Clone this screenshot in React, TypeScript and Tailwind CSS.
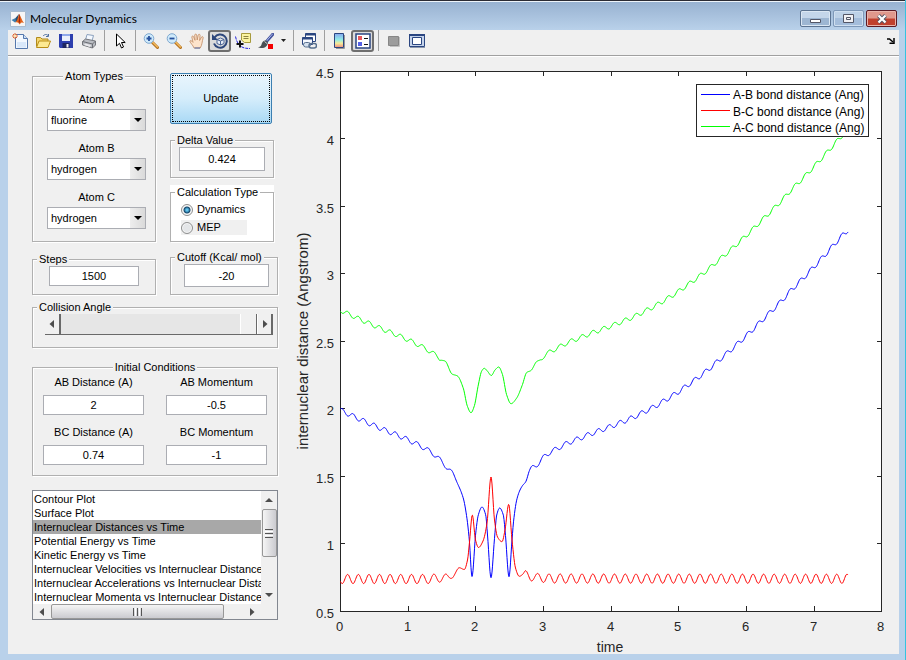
import { useState } from 'react';
import type { ReactNode } from 'react';
import clsx from 'clsx';

type Point = [number, number];

const ATOMS = ['hydrogen', 'fluorine', 'chlorine', 'oxygen'];

const PLOTS = [
  'Contour Plot',
  'Surface Plot',
  'Internuclear Distances vs Time',
  'Potential Energy vs Time',
  'Kinetic Energy vs Time',
  'Internuclear Velocities vs Internuclear Distance',
  'Internuclear Accelerations vs Internuclear Distance',
  'Internuclear Momenta vs Internuclear Distance',
];

// Mean A-B distance, without the B-C vibration
const AB_KNOTS: Point[] = [
  [340, 410], [350, 414.7], [366.5, 422.2], [382.7, 429.2], [399, 435.8],
  [415.3, 443.3], [426.3, 449.2], [437.3, 457], [447.3, 468], [451.7, 471],
  [456.7, 481.7], [463.3, 498.3], [466.7, 516.7], [469.3, 540], [472, 576.5],
  [475.7, 533.3], [478.3, 515], [482, 507], [485.7, 515], [487.5, 535],
  [491, 577.7], [494.5, 538.3], [496.7, 515], [499.7, 508], [503.3, 515],
  [505.3, 533.3], [509, 576.7], [512, 540], [513.7, 520], [516.7, 500],
  [520, 490], [526, 480], [529.3, 471.7], [532.7, 467], [536.7, 465],
  [546, 455], [557.7, 448.3], [569, 442.5], [579.7, 438.3], [590.3, 434],
  [601.2, 430], [612, 426], [622.7, 421.7], [633.5, 417.2], [644.3, 411.8],
  [655, 406.3], [665.5, 400], [676.2, 393.3], [686.5, 386], [697.2, 378.2],
  [707.7, 370], [718, 361], [728.7, 351.8], [739.3, 342.2], [750, 332.2],
  [760.5, 321.8], [771, 311.5], [781.7, 300.7], [791.7, 289.7],
  [802.7, 278.7], [823.3, 256.7], [843.8, 234], [848, 230],
];

const BC_KNOTS: Point[] = [
  [340, 579], [425, 579], [446, 577.5], [452.3, 577], [459.3, 567.7],
  [464.3, 569.5], [467.5, 560], [469.5, 542], [472.3, 515], [475.5, 540],
  [478.5, 547.5], [483, 541], [487, 523], [491, 477], [494.5, 520],
  [497.5, 537], [502, 541.7], [505, 530], [508.7, 504.3], [512, 540],
  [515.5, 568], [519.3, 576.3], [525.3, 573], [531.7, 577.5], [538, 577.5],
  [549, 578.5], [848, 578.8],
];

// A-C distance while the atoms collide
const AC_KNOTS: Point[] = [
  [440, 360], [445, 361], [452, 374], [457.5, 376], [463.3, 388.3],
  [467.3, 406], [471, 412.7], [474.3, 406], [478.3, 385], [481.7, 371],
  [484.3, 368.3], [487.3, 371], [491.3, 375.5], [495, 370], [498.7, 367],
  [502.3, 374], [506.7, 395], [511, 403.7], [516.7, 398], [522.3, 385],
  [526.7, 372.5], [531, 370.5], [536.7, 361.5], [540, 360],
];

// Positions of the vibration peaks, numbered
const PHASE_KNOTS: Point[] = [
  [336.8, -1], [347.6, 0], [445.8, 9], [459.3, 10], [525.3, 16], [537.5, 17],
  [549, 18], [582, 21], [678.7, 30], [847, 46], [857, 47],
];

const AMPLITUDE_KNOTS: Point[] = [
  [340, 1], [430, 1], [446, 0.75], [456, 0], [522, 0], [526, 0.55],
  [538, 0.9], [549, 1], [850, 1],
];

// Monotone cubic (Fritsch-Carlson) through the knots
function monotone(points: Point[]) {
  const n = points.length;
  const slopes = points.slice(1).map(([x, y], i) => (y - points[i][1]) / (x - points[i][0]));
  const tangents = points.map((_, i) => {
    if (i === 0) return slopes[0];
    if (i === n - 1) return slopes[n - 2];
    const a = slopes[i - 1];
    const b = slopes[i];
    return a * b <= 0 ? 0 : (2 * a * b) / (a + b);
  });

  return (x: number) => {
    let i = 0;
    while (i < n - 2 && x > points[i + 1][0]) i++;
    const h = points[i + 1][0] - points[i][0];
    const t = (x - points[i][0]) / h;
    const t2 = t * t;
    const t3 = t2 * t;
    return (
      (2 * t3 - 3 * t2 + 1) * points[i][1] +
      (t3 - 2 * t2 + t) * h * tangents[i] +
      (3 * t2 - 2 * t3) * points[i + 1][1] +
      (t3 - t2) * h * tangents[i + 1]
    );
  };
}

const meanAB = monotone(AB_KNOTS);
const meanBC = monotone(BC_KNOTS);
const collisionAC = monotone(AC_KNOTS);
const phase = monotone(PHASE_KNOTS);
const amplitude = monotone(AMPLITUDE_KNOTS);

const wave = (x: number) => amplitude(x) * Math.cos(2 * Math.PI * phase(x));
const curveAB = (x: number) => meanAB(x) + 2.4 * wave(x);
const curveBC = (x: number) => meanBC(x) - 4.6 * wave(x);
const curveAC = (x: number) =>
  x > 440 && x < 540 ? collisionAC(x) : curveAB(x) + curveBC(x) - 679;

function trace(fn: (x: number) => number) {
  const out: string[] = [];
  for (let x = 340.5; x <= 848; x += 0.5) out.push(`${x},${fn(x).toFixed(2)}`);
  return out.join(' ');
}

const SERIES = [
  { label: 'A-B bond distance (Ang)', color: '#0000ff', points: trace(curveAB) },
  { label: 'B-C bond distance (Ang)', color: '#ff0000', points: trace(curveBC) },
  { label: 'A-C bond distance (Ang)', color: '#00ff00', points: trace(curveAC) },
];

const X_TICKS = [0, 1, 2, 3, 4, 5, 6, 7, 8];
const Y_TICKS = [0.5, 1, 1.5, 2, 2.5, 3, 3.5, 4, 4.5];
const tickX = (t: number) => Math.round(340 + t * 67.65) + 0.5;
const tickY = (v: number) => Math.round(679 - v * 135) - 0.5;

const Chart = () => (
  <svg
    viewBox="290 57 609 597"
    className="w-full"
    role="img"
    aria-label="Internuclear distances vs time"
    fontFamily='"Liberation Sans", Arial, sans-serif'
  >
    <rect x="340.5" y="71.5" width="541" height="540" fill="#fff" stroke="#262626" />
    {X_TICKS.map(t => (
      <g key={t}>
        <path d={`M${tickX(t)} 611v-5M${tickX(t)} 71v5`} stroke="#262626" />
        <text x={tickX(t) - 1} y="631" fontSize="13" textAnchor="middle" fill="#262626">
          {t}
        </text>
      </g>
    ))}
    {Y_TICKS.map(v => (
      <g key={v}>
        <path d={`M340 ${tickY(v)}h5M882 ${tickY(v)}h-5`} stroke="#262626" />
        <text x="334" y={tickY(v) + 6} fontSize="13" textAnchor="end" fill="#262626">
          {v}
        </text>
      </g>
    ))}
    <text x="610" y="652" fontSize="14" textAnchor="middle" fill="#262626">
      time
    </text>
    <text
      transform="translate(308 341) rotate(-90)"
      fontSize="15"
      textAnchor="middle"
      fill="#262626"
    >
      internuclear distance (Angstrom)
    </text>
    {SERIES.map(s => (
      <polyline key={s.label} points={s.points} fill="none" stroke={s.color} strokeLinejoin="round" />
    ))}
    <rect x="696.5" y="84.5" width="172" height="52" fill="#fff" stroke="#262626" />
    {SERIES.map((s, i) => (
      <g key={s.label}>
        <path d={`M701 ${94.5 + i * 16}h29`} stroke={s.color} />
        <text x="733" y={99 + i * 16.5} fontSize="12" fill="#000">
          {s.label}
        </text>
      </g>
    ))}
  </svg>
);

const Icon = ({ children }: { children: ReactNode }) => (
  <svg viewBox="0 0 16 16" className="size-4" fill="none" aria-hidden="true">
    {children}
  </svg>
);

const MatlabIcon = () => (
  <Icon>
    <path d="M0.5 0.5h15v15h-15z" fill="#f6f6f6" stroke="#a9bccf" />
    <path d="M1.5 9 5.5 7 7.5 9.5 5 11.5z" fill="#3f7fae" />
    <path d="M5.5 7 9 3 8 9 6 11z" fill="#274f74" />
    <path d="M9 3C10.5 4 11.5 9 14 12c-2-1-3-.7-4.5 1.5C8.600 11.500 7.500 11 5 11.500 7.500 10 8 6 9 3z" fill="#e2621b" />
    <path d="M9 3c1 1 1.500 5 1 9L8.500 11C9.500 8 9 5 9 3z" fill="#9c2812" />
  </Icon>
);

const NewIcon = () => (
  <Icon>
    <path d="M3.500 1.500h8l4 4v10h-12z" fill="#f3f8fe" stroke="#5578ad" />
    <path d="M5 9h9v5.500H5z" fill="#d9e8fa" />
    <path d="M11.500 1.500v4h4" fill="#cfe0f5" stroke="#5578ad" />
    <path d="M3 0v6M0 3h6M1 1l4 4M5 1 1 5" stroke="#e2622c" />
    <circle cx="3" cy="3" r="1.200" fill="#ffe8b0" />
  </Icon>
);

const OpenIcon = () => (
  <Icon>
    <path d="M1.500 13.500v-9h4l1.500 1.500h6v2" fill="#f6d66d" stroke="#b08a1c" />
    <path d="M1.500 14.500 4 8h11.500l-2.500 6.500z" fill="#fdea92" stroke="#b98e16" />
    <path d="M8 3c2-2 4-2 5.500 0M13.500 1v2.500H11" stroke="#4f6f9f" />
  </Icon>
);

const SaveIcon = () => (
  <Icon>
    <path d="M1 1h14v14H2l-1-1z" fill="#2d3fae" />
    <path d="M4 1h8v7H4z" fill="#e9effb" />
    <path d="M4 1h8v2H4z" fill="#8fa8ea" />
    <path d="M4.500 10h7v5h-7z" fill="#1c2560" />
    <path d="M8.500 11h2v3.500h-2z" fill="#f2f2f2" />
  </Icon>
);

const PrintIcon = () => (
  <Icon>
    <path d="M4.500 7 6 1.500l6.500 1L11 8z" fill="#f3f8ff" stroke="#8ba1bd" />
    <path d="M1.500 8.500 4.500 6l10 2v4l-3 3-10-3z" fill="#b9bcc2" stroke="#74777c" />
    <path d="m1.500 8.500 10 2.500 3-3M11.500 11v4" stroke="#6b6e74" />
    <path d="m3 12 1-1.500 6 1.500-1 2z" fill="#e9e9ec" />
  </Icon>
);

const PointerIcon = () => (
  <Icon>
    <path d="M4.500 1v12l3-2.700L9.500 15l2-1L9.500 9.500h3.700z" fill="#fff" stroke="#000" />
  </Icon>
);

const Magnifier = ({ plus }: { plus?: boolean }) => (
  <Icon>
    <path d="m9.500 9.500 5 5" stroke="#b4711f" strokeWidth="3" strokeLinecap="round" />
    <path d="m9.500 9 5 5" stroke="#f1b95e" strokeWidth="1.500" strokeLinecap="round" />
    <circle cx="6" cy="5.500" r="4.800" fill="#cfeafb" stroke="#7fa8cf" />
    <path d={plus ? 'M3.500 5.500h5M6 3v5' : 'M3.500 5.500h5'} stroke="#26519e" strokeWidth="1.800" />
  </Icon>
);

const HandIcon = () => (
  <Icon>
    <path
      d="M5 15C4 12 1.500 10.500.800 8c.5-1 2-.3 3.200 1.400L2.800 4c0-1.300 1.500-1.300 1.900 0L6 7.300 5.700 2c.2-1.200 1.800-1.200 2 0l.5 5 1-5c.4-1.100 1.900-.9 1.900.3l-.5 5.200 1.900-3.500c.7-1 2-.2 1.600 1-1 3.500-1 7-2.900 10z"
      fill="#fde3cb"
      stroke="#c08a62"
      strokeWidth=".8"
    />
    <path d="M5.500 15h5.500" stroke="#506aa8" />
  </Icon>
);

const RotateIcon = () => (
  <Icon>
    <path d="M2.600 4.500A6.600 6.600 0 1 1 2 10.500" stroke="#2d477c" strokeWidth="2" />
    <path d="M0 1v6h6z" fill="#2d477c" />
    <path d="m5 6.500 3.500-1.500L12 6.500v4L8.500 12 5 10.500zM5 6.500 8.500 8 12 6.500M8.500 8v4" fill="#e8eef8" stroke="#4b6496" />
  </Icon>
);

const DataCursorIcon = () => (
  <Icon>
    <path d="M.500 3.500c1 5 3 9 7.500 11 3 1 5 1 7 1" stroke="#2222dd" strokeDasharray="3 1" />
    <path d="M6.500.500h9v9H9.500L6.500 7z" fill="#fbf4a1" stroke="#a79a3c" />
    <path d="M8.500 3.500h5M8.500 5.500h5" stroke="#8d8342" />
    <path d="M5 7.500v7M1.500 11h7" stroke="#111" strokeWidth="2" />
  </Icon>
);

const BrushIcon = () => (
  <Icon>
    <path d="M15 1 8.500 8.500" stroke="#45549c" strokeWidth="3" strokeLinecap="round" />
    <path d="M14.500 1 8.500 8" stroke="#aab8ee" strokeLinecap="round" />
    <path d="M8.500 7.500C5.500 7 4 9 3.500 11.500 3 13.500 1.500 14 0 14c2 1.500 6 1.500 8-.5 1.500-1.500 2-3 1.800-4.500z" fill="#4b5054" />
    <path d="m6.500 8.500 2.500 2" stroke="#c8cdd3" />
    <path d="M10 11h5v5h-5z" fill="#f40000" />
  </Icon>
);

const LinkIcon = () => (
  <Icon>
    <path d="M4.500.500h10v8h-10z" fill="#fff" stroke="#2b4681" />
    <path d="M4.500 1.500h10" stroke="#2b4681" strokeWidth="2" />
    <path d="M1.500 4.500h10v7h-10z" fill="#f6f9ff" stroke="#2b4681" />
    <path d="M1.500 5.500h10" stroke="#2b4681" strokeWidth="2" />
    <rect x="2.500" y="9.500" width="7" height="4.500" rx="2.200" fill="#d5e1ef" stroke="#58708f" />
    <rect x="8" y="10.500" width="7.500" height="4.500" rx="2.200" stroke="#58708f" strokeWidth="1.500" />
  </Icon>
);

const ColorbarIcon = () => (
  <Icon>
    <defs>
      <linearGradient id="colorbar" x1="0" y1="0" x2="0" y2="1">
        <stop offset="0" stopColor="#86a6f0" />
        <stop offset="0.45" stopColor="#92eee6" />
        <stop offset="0.7" stopColor="#f4ec9a" />
        <stop offset="1" stopColor="#f08a80" />
      </linearGradient>
    </defs>
    <path d="M12.500 2v13.500H4" stroke="#999" />
    <path d="M2.500.500h9v14h-9z" fill="url(#colorbar)" stroke="#2b4681" />
  </Icon>
);

const LegendIcon = () => (
  <Icon>
    <path d="M1 1h14v14H1z" fill="#fff" stroke="#2b4681" strokeWidth="1.500" />
    <path d="M3 3h4v4H3z" fill="#e8585c" />
    <path d="M3 9h4v4H3z" fill="#5560e6" />
    <path d="M9 5.500h4M9 11.500h4" stroke="#111" />
  </Icon>
);

const HideToolsIcon = () => (
  <Icon>
    <path d="M13.500 4v9.500H4" stroke="#c2c2c2" />
    <path d="M2.500 3.500h10v9h-10z" fill="#9c9c9c" stroke="#868686" />
  </Icon>
);

const ShowToolsIcon = () => (
  <Icon>
    <path d="M.500 1.500h15v12H.500z" fill="#c5d3ea" stroke="#2b4681" />
    <path d="M0 2h16" stroke="#2b4681" strokeWidth="2" />
    <path d="M3.500 4.500h9v7h-9z" fill="#fff" stroke="#2b4681" />
    <path d="M1 14.500h15" stroke="#8c98ad" />
  </Icon>
);

interface ToolProps {
  label: string;
  pressed?: boolean;
  children: ReactNode;
}

const Tool = ({ label, pressed, children }: ToolProps) => (
  <button
    type="button"
    aria-label={label}
    aria-pressed={pressed}
    className={clsx(
      'flex h-[22px] w-[23px] shrink-0 items-center justify-center',
      pressed && 'rounded-[3px] border-2 border-[#6f6f6f] bg-[#dcdcdc]'
    )}
  >
    {children}
  </button>
);

const Separator = () => (
  <div className="flex w-2 shrink-0 justify-center">
    <div className="h-[21px] w-px bg-[#a0a0a0]" />
  </div>
);

const Toolbar = () => (
  <div className="flex h-[26px] items-center border-b border-[#a0a0a0] bg-[#f0f0f0] pb-1">
    <Tool label="New Figure"><NewIcon /></Tool>
    <Tool label="Open File"><OpenIcon /></Tool>
    <Tool label="Save Figure"><SaveIcon /></Tool>
    <Tool label="Print Figure"><PrintIcon /></Tool>
    <Separator />
    <Tool label="Edit Plot"><PointerIcon /></Tool>
    <Separator />
    <Tool label="Zoom In"><Magnifier plus /></Tool>
    <Tool label="Zoom Out"><Magnifier /></Tool>
    <Tool label="Pan"><HandIcon /></Tool>
    <Tool label="Rotate 3D" pressed><RotateIcon /></Tool>
    <Tool label="Data Cursor"><DataCursorIcon /></Tool>
    <Tool label="Brush Data"><BrushIcon /></Tool>
    <button type="button" aria-label="Brush colors" className="flex w-3 shrink-0 justify-center">
      <svg viewBox="0 0 5 3" className="h-[3px] w-[5px]"><path d="M0 0h5L2.500 3z" fill="#222" /></svg>
    </button>
    <Separator />
    <Tool label="Link Plot"><LinkIcon /></Tool>
    <Separator />
    <Tool label="Insert Colorbar"><ColorbarIcon /></Tool>
    <Tool label="Insert Legend" pressed><LegendIcon /></Tool>
    <Separator />
    <Tool label="Hide Plot Tools"><HideToolsIcon /></Tool>
    <Tool label="Show Plot Tools"><ShowToolsIcon /></Tool>
    <button type="button" aria-label="Dock Figure" className="mr-1 ml-auto">
      <svg viewBox="0 0 8 6" className="h-[6px] w-2" fill="none">
        <path d="M0 1h2.500L6 4" stroke="#000" strokeWidth="1.500" />
        <path d="M7 0v5.300H2.500" stroke="#000" strokeWidth="1.500" />
      </svg>
    </button>
  </div>
);

const TitleBar = () => (
  <header className="flex h-[30px] items-center border-t border-[#2b2b33] bg-linear-to-b from-[#97b1d0] to-[#b9d1ea] pr-2 pl-[10px] shadow-[inset_0_1px_0_#eef4fa]">
    <div className="mt-[6px]">
      <MatlabIcon />
    </div>
    <h1 className="mt-[6px] ml-1 flex-1 font-['Lato','Open_Sans',sans-serif] text-xs leading-4 text-black">
      Molecular Dynamics
    </h1>
    <div className="mt-[6px] flex gap-[2px]">
      <button type="button" aria-label="Minimize" className="flex h-[17px] w-[31px] items-center justify-center rounded-[2px] border border-[#5b7391] bg-linear-to-b from-[#c4d6ea] from-50% to-[#9db6d2] to-50% shadow-[inset_0_0_0_1px_#dbe7f3]">
        <svg viewBox="0 0 11 11" className="size-[11px]"><path d="M.500 6.500h10v3H.500z" fill="#fff" stroke="#535666" /></svg>
      </button>
      <button type="button" aria-label="Maximize" className="flex h-[17px] w-[31px] items-center justify-center rounded-[2px] border border-[#7e98b8] bg-linear-to-b from-[#bdd1e7] from-50% to-[#a4bddb] to-50% shadow-[inset_0_0_0_1px_#cfdff0]">
        <svg viewBox="0 0 11 9" className="h-[9px] w-[11px]"><path d="M.500.500h10v8H.500zM3.500 3.500h4v2h-4z" fill="#f1f1f4" stroke="#535666" /></svg>
      </button>
      <button type="button" aria-label="Close" className="flex h-[17px] w-[31px] items-center justify-center rounded-[2px] border border-[#5c1a24] bg-linear-to-b from-[#e0988c] from-45% to-[#c0402e] to-55% shadow-[inset_0_0_0_1px_#e9b3aa]">
        <svg viewBox="0 0 12 10" className="h-[10px] w-3" fill="none">
          <path d="m2.500 1.500 7 7M9.500 1.500l-7 7" stroke="#535666" strokeWidth="4" />
          <path d="m2.500 1.500 7 7M9.500 1.500l-7 7" stroke="#fff" strokeWidth="2.200" />
        </svg>
      </button>
    </div>
  </header>
);

interface GroupProps {
  title: string;
  centered?: boolean;
  white?: boolean;
  className?: string;
  children: ReactNode;
}

const Group = ({ title, centered, white, className, children }: GroupProps) => (
  <fieldset className="min-w-0 border border-[#b0b0b0] shadow-[1px_1px_0_#fff,inset_1px_1px_0_#fff]">
    <legend
      className={clsx(
        'h-[14px] px-[2px] leading-[14px] whitespace-nowrap',
        centered ? 'mx-auto' : 'ml-1',
        white ? 'bg-white' : 'bg-[#f0f0f0]'
      )}
    >
      {title}
    </legend>
    <div className={className}>{children}</div>
  </fieldset>
);

interface FieldProps {
  id: string;
  label: string;
  value: string;
  showLabel?: boolean;
  className?: string;
}

const Field = ({ id, label, value, showLabel, className }: FieldProps) => (
  <div className="flex flex-col">
    {showLabel && (
      <label htmlFor={id} className="mb-[5px] text-center leading-4">
        {label}
      </label>
    )}
    <input
      id={id}
      aria-label={label}
      defaultValue={value}
      className={clsx('w-full border border-[#abadb3] bg-white text-center outline-none', className)}
    />
  </div>
);

const AtomSelect = ({ id, label, value }: { id: string; label: string; value: string }) => (
  <div className="flex flex-col">
    <label htmlFor={id} className="mb-[2px] text-center leading-4">
      {label}
    </label>
    <div className="relative">
      <select
        id={id}
        defaultValue={value}
        className="h-[22px] w-full appearance-none border border-[#abadb3] bg-white pl-[3px] outline-none"
      >
        {ATOMS.map(atom => (
          <option key={atom}>{atom}</option>
        ))}
      </select>
      <div className="pointer-events-none absolute top-px right-px bottom-px flex w-[15px] items-center justify-center bg-linear-to-r from-[#eeeeee] to-[#dadada]">
        <svg viewBox="0 0 8 4" className="h-1 w-2"><path d="M0 0h8L4 4z" /></svg>
      </div>
    </div>
  </div>
);

const Triangle = ({ direction }: { direction: 'left' | 'right' | 'up' | 'down' }) => {
  const paths = {
    left: 'M6 0v8L1.500 4z',
    right: 'M2 0v8l4.500-4z',
    up: 'M0 6h8L4 2z',
    down: 'M0 2h8L4 6z',
  };
  return (
    <svg viewBox="0 0 8 8" className="size-2" fill="#4d4d4d">
      <path d={paths[direction]} />
    </svg>
  );
};

const ControlPanel = () => {
  const [mode, setMode] = useState('Dynamics');
  const [plot, setPlot] = useState(PLOTS[2]);

  return (
    <form className="w-[246px] shrink-0" onSubmit={e => e.preventDefault()}>
      <div className="flex gap-[14px]">
        <div className="flex w-[124px] flex-col gap-[10px] pt-3">
          <Group title="Atom Types" centered className="pt-2 pr-[9px] pb-3 pl-[14px]">
            <div className="flex flex-col gap-[9px]">
              <AtomSelect id="atom-a" label="Atom A" value="fluorine" />
              <AtomSelect id="atom-b" label="Atom B" value="hydrogen" />
              <AtomSelect id="atom-c" label="Atom C" value="hydrogen" />
            </div>
          </Group>
          <Group title="Steps" className="px-4 pb-[8px]">
            <Field id="steps" label="Steps" value="1500" className="h-5" />
          </Group>
        </div>

        <div className="flex min-w-0 flex-1 flex-col pt-4">
          <button
            type="submit"
            className="mr-[6px] h-[51px] rounded-[2px] border border-[#3c7fb1] bg-linear-to-b from-[#e9f5fd] from-0% via-[#d5edfb] via-50% to-[#a9d9f5] p-px"
          >
            <span className="flex h-full items-center justify-center border border-dotted border-black">
              Update
            </span>
          </button>
          <div className="mt-[9px] mr-1">
            <Group title="Delta Value" className="px-2 pb-[6px]">
              <Field id="delta" label="Delta Value" value="0.424" className="h-6" />
            </Group>
          </div>
          <div className="mt-[7px] mr-1 bg-white">
            <Group title="Calculation Type" white className="px-[10px] pt-[3px] pb-[6px]">
              {['Dynamics', 'MEP'].map(name => (
                <label
                  key={name}
                  className={clsx('flex h-[15px] items-center gap-1', name === 'MEP' && 'mr-4 mt-[3px] bg-[#f0f0f0]')}
                >
                  <input
                    type="radio"
                    name="calculation"
                    checked={mode === name}
                    onChange={() => setMode(name)}
                    className="size-3 appearance-none rounded-full border border-[#8e8f8f] bg-[#e4e6e8] shadow-[inset_0_0_0_1px_#f8f8f8] checked:bg-[radial-gradient(circle,#5fc4ee_0_1px,#14466b_3px,#f4f4f4_4px)]"
                  />
                  {name}
                </label>
              ))}
            </Group>
          </div>
          <div className="mt-2">
            <Group title="Cutoff (Kcal/ mol)" className="pr-2 pb-[7px] pl-[13px]">
              <Field id="cutoff" label="Cutoff" value="-20" className="h-[23px]" />
            </Group>
          </div>
        </div>
      </div>

      <div className="mt-[5px]">
        <Group title="Collision Angle" className="pr-1 pb-3 pl-3">
          <div className="flex h-[21px] border-b border-[#696969] bg-[#e6e6e6]">
            <button type="button" aria-label="Decrease angle" className="flex w-4 items-center justify-center border-r-2 border-[#696969] bg-[#f0f0f0]">
              <Triangle direction="left" />
            </button>
            <input
              type="range"
              aria-label="Collision Angle"
              min={0}
              max={180}
              defaultValue={180}
              className="h-full min-w-0 flex-1 appearance-none bg-transparent [&::-webkit-slider-thumb]:h-5 [&::-webkit-slider-thumb]:w-[17px] [&::-webkit-slider-thumb]:appearance-none [&::-webkit-slider-thumb]:border-r [&::-webkit-slider-thumb]:border-l [&::-webkit-slider-thumb]:border-r-[#696969] [&::-webkit-slider-thumb]:border-l-white [&::-webkit-slider-thumb]:bg-[#f0f0f0]"
            />
            <button type="button" aria-label="Increase angle" className="flex w-4 items-center justify-center border-r-2 border-l border-r-[#696969] border-l-white bg-[#f0f0f0]">
              <Triangle direction="right" />
            </button>
          </div>
        </Group>
      </div>

      <div className="mt-3">
        <Group title="Initial Conditions" centered className="px-[10px] pb-[10px]">
          <div className="grid grid-cols-2 gap-x-[22px] gap-y-[9px]">
            <Field id="ab-distance" label="AB Distance (A)" value="2" showLabel className="h-5" />
            <Field id="ab-momentum" label="AB Momentum" value="-0.5" showLabel className="h-5" />
            <Field id="bc-distance" label="BC Distance (A)" value="0.74" showLabel className="h-5" />
            <Field id="bc-momentum" label="BC Momentum" value="-1" showLabel className="h-5" />
          </div>
        </Group>
      </div>

      <div className="mt-[14px] border border-[#828790] bg-[#f0f0f0]">
        <div className="flex">
          <ul role="listbox" aria-label="Plot type" className="min-w-0 flex-1 overflow-hidden bg-white pt-px">
            {PLOTS.map(name => (
              <li
                key={name}
                role="option"
                aria-selected={plot === name}
                onClick={() => setPlot(name)}
                className={clsx('h-[14px] pl-px leading-[14px] whitespace-nowrap', plot === name && 'bg-[#a8a8a8]')}
              >
                {name}
              </li>
            ))}
          </ul>
          <div className="flex w-4 flex-col items-center">
            <button type="button" aria-label="Scroll up" className="flex h-[18px] items-center">
              <Triangle direction="up" />
            </button>
            <div className="flex h-12 w-[15px] flex-col items-center justify-center gap-px rounded-[2px] border border-[#979797] bg-linear-to-r from-[#f5f5f5] to-[#cbcbd0]">
              <div className="h-px w-2 bg-[#555]" />
              <div className="h-px w-2 bg-white" />
              <div className="h-px w-2 bg-[#555]" />
              <div className="h-px w-2 bg-white" />
              <div className="h-px w-2 bg-[#555]" />
            </div>
            <button type="button" aria-label="Scroll down" className="mt-auto flex h-[18px] items-center">
              <Triangle direction="down" />
            </button>
          </div>
        </div>
        <div className="mr-4 flex h-[15px] items-center">
          <button type="button" aria-label="Scroll left" className="flex w-[18px] justify-center">
            <Triangle direction="left" />
          </button>
          <div className="flex h-[15px] w-[173px] items-center justify-center gap-px rounded-[2px] border border-[#979797] bg-linear-to-b from-[#f5f5f5] to-[#cbcbd0]">
            <div className="h-2 w-px bg-[#555]" />
            <div className="h-2 w-px bg-white" />
            <div className="h-2 w-px bg-[#555]" />
            <div className="h-2 w-px bg-white" />
            <div className="h-2 w-px bg-[#555]" />
          </div>
          <button type="button" aria-label="Scroll right" className="ml-auto flex w-[18px] justify-center">
            <Triangle direction="right" />
          </button>
        </div>
      </div>
    </form>
  );
};

const App = () => (
  <div className="flex min-h-screen flex-col border-r border-[#35c3e0] bg-[#b9d1ea] font-['Liberation_Sans',Arial,sans-serif] text-[11px] text-black">
    <TitleBar />
    <div className="mr-[6px] mb-[6px] ml-2 flex flex-1 flex-col bg-[#f0f0f0]">
      <Toolbar />
      <main className="flex flex-1 items-start gap-3 border-t border-white pl-6">
        <ControlPanel />
        <div className="min-w-0 flex-1">
          <Chart />
        </div>
      </main>
    </div>
  </div>
);

export default App;
